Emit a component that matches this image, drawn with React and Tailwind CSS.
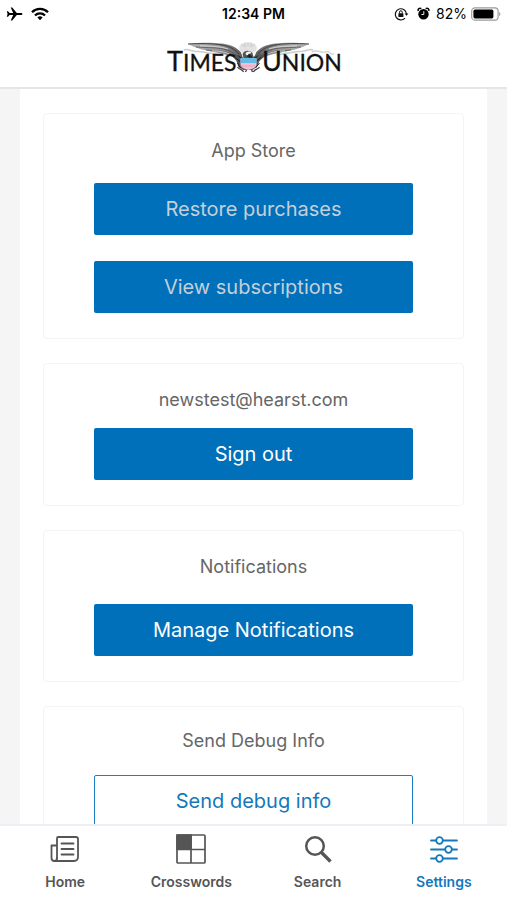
import React, { useState } from "react";

const Airplane = () => (
  <svg width="17" height="14" viewBox="0 0 17 14" aria-hidden="true">
    <path d="M16.5 7c0-.7-.8-1.1-1.7-1.1h-4L6.2.6H4.7l2.5 5.3H3.6L2 4.2H.8L1.6 7 .8 9.8H2l1.6-1.7h3.6l-2.5 5.3h1.5l4.6-5.3h4c.9 0 1.7-.4 1.7-1.1z" fill="#000" />
  </svg>
);

const Wifi = () => (
  <svg width="18" height="14" viewBox="0 0 18 14" fill="none" stroke="#000" strokeWidth="2.3" aria-hidden="true">
    <path d="M1 5.2a11.3 11.3 0 0 1 16 0" />
    <path d="M4 8.5a7.1 7.1 0 0 1 10 0" />
    <path d="M9 13.2 6.4 10.6a3.7 3.7 0 0 1 5.2 0z" fill="#000" stroke="none" />
  </svg>
);

const RotationLock = () => (
  <svg width="15" height="14" viewBox="0 0 15 14" fill="none" stroke="#111" strokeWidth="1.2" aria-hidden="true">
    <path d="M11 11.2A5.6 5.6 0 1 1 12.5 7" />
    <path d="M10.6 6.4h3.8l-1.9 2.4z" fill="#111" stroke="none" />
    <rect x="4.4" y="6.3" width="5" height="3.8" rx=".5" fill="#111" stroke="none" />
    <path d="M5.5 6.5V5.2a1.4 1.4 0 0 1 2.8 0v1.3" strokeWidth="1" />
  </svg>
);

const Alarm = () => (
  <svg width="13" height="14" viewBox="0 0 13 14" aria-hidden="true">
    <circle cx="6.5" cy="7.3" r="5.2" fill="#000" />
    <path d="M1.3 4A2 2 0 0 1 4.3 1.6M11.7 4a2 2 0 0 0-3-2.4" stroke="#000" strokeWidth="1.5" fill="none" />
    <path d="M6.8 4.2v3.3H4.4" stroke="#fff" strokeWidth=".9" fill="none" />
  </svg>
);

const Battery = () => (
  <svg width="30" height="14" viewBox="0 0 30 14" aria-hidden="true">
    <rect x=".7" y=".9" width="26.4" height="12.2" rx="3.2" fill="none" stroke="#999" strokeWidth="1.1" />
    <rect x="2.4" y="2.6" width="20" height="8.8" rx="1.6" fill="#000" />
    <path d="M28.2 4.9c1.6.6 1.6 3.6 0 4.2z" fill="#999" />
  </svg>
);

// one wing, drawn for the left side and mirrored for the right
const Wing = () => (
  <>
    <path d="M24 2c11-1.5 24-1.5 34-.5 9 1 15 4 19 9l3 9-9-3C62 10 40 11 24 2z" fill="url(#wing)" />
    <path d="M24 2c13-.8 25-.6 35 1 8 1.5 13 5 16 9" stroke="#444" strokeWidth="1" fill="none" />
    <path d="M32 5c12 1 22 0 31 3 6 2 9 5 12 9M42 8c9 1 17 0 24 4M56 3c8 1 14 4 19 10" stroke="#555" strokeWidth=".8" fill="none" />
    <path d="M36 3.8c10 .5 19 .2 28 3M48 8.8c7 0 12 .8 17 3" stroke="#eee" strokeWidth=".7" fill="none" />
    <path d="M20 8c4-2 8 2 13 1.5s8 1.500 12 1.500 7 2 12 2" stroke="#ccc" strokeWidth="1.5" fill="none" />
  </>
);

const Logo = () => (
  <svg width="180" height="44" viewBox="0 -2 180 44" role="img" aria-label="Times Union">
    <defs>
      <linearGradient id="wing" x1="0" x2="1">
        <stop offset="0" stopColor="#b5b5b5" />
        <stop offset=".6" stopColor="#959595" />
        <stop offset="1" stopColor="#555" />
      </linearGradient>
    </defs>
    <Wing />
    <g transform="matrix(-1 0 0 1 169 0)">
      <Wing />
    </g>
    <path d="M148 10c5-3 8 1 13 0 5-2 4 3 9 2" stroke="#d4d4d4" strokeWidth="1.5" fill="none" />
    <g transform="translate(-1.5 0)">
      {/* glory behind the head */}
      <ellipse cx="85.5" cy="6" rx="9" ry="6" fill="#e2e2e2" />
      <path d="M79 2l3 3M82 1l1 4M85.5 1v3M89 1l-1 4M92 2l-3 3" stroke="#c4c4c4" strokeWidth=".8" />
      {/* body */}
      <path d="M69 13c5-1 9 0 12 3l-1-4c2-4 7-4 10-1l1 4c3-3 7-4 12-2l-6 6-3 6-4 3H81l-5-3-2-6z" fill="#555" />
      <path d="M83 12c1-3 5-3 6-1l-3 1-1 2z" fill="#f3f3f3" />
      <path d="M72 15l6 5M76 14l5 4M99 15l-6 5M95 14l-5 4M75 21l3 5M97 21l-4 5" stroke="#1c1c1c" strokeWidth="1" />
      <path d="M84 14l3-2 3 3-3 1z" fill="#222" />
      <path d="M78 17h16v6c-1 3-4 4-8 5-4-1-7-2-8-5z" fill="#f3bcd4" />
      <path d="M78 16h16v5H78z" fill="#62bbe5" />
      <path d="M78 24h15" stroke="#e59cbd" strokeWidth=".8" />
      <path d="M75 25c2 3 5 2 6 5M97 25c-2 3-5 2-6 5M84 28l-1 2M89 28l1 2" stroke="#444" strokeWidth="1.3" fill="none" />
    </g>
    <g fill="#111" stroke="#111" strokeWidth=".3" className="font-[Lato,'Liberation_Sans',sans-serif]">
      <text x="3" y="29" fontSize="27">T<tspan fontSize="23">IMES</tspan></text>
      <text x="98" y="29" fontSize="27">U<tspan fontSize="23">NION</tspan></text>
    </g>
  </svg>
);

const HomeIcon = () => (
  <svg width="30" height="30" viewBox="0 0 30 30" fill="none" stroke="currentColor" strokeWidth="1.8" strokeLinecap="round" strokeLinejoin="round" aria-hidden="true">
    <path d="M7 24.5V4.2Q7 3 8.2 3h17.6Q28 3 28 5.2v17.600Q28 27 24 27H4.5Q1.5 27 1.5 24V11.5H7" />
    <path d="M7 24q0 3-2.5 3" />
    <path d="M11.5 9.5h12M11.5 15h12M11.5 20.5h12" />
  </svg>
);

const CrosswordIcon = () => (
  <svg width="30" height="30" viewBox="0 0 30 30" fill="none" stroke="currentColor" strokeWidth="1.7" aria-hidden="true">
    <rect x="1" y="1" width="28" height="28" rx="1" />
    <path d="M1 1h14v14H1z" fill="currentColor" />
    <path d="M15 1v28M1 15.5h28" />
  </svg>
);

const SearchIcon = () => (
  <svg width="30" height="30" viewBox="0 0 30 30" fill="none" stroke="currentColor" aria-hidden="true">
    <circle cx="12" cy="12" r="8.8" strokeWidth="2.5" />
    <path d="M18.5 18.5 27.5 27.5" strokeWidth="3.4" />
  </svg>
);

const SettingsIcon = () => (
  <svg width="30" height="30" viewBox="0 0 30 30" fill="none" stroke="currentColor" strokeWidth="1.8" strokeLinecap="round" aria-hidden="true">
    <path d="M2 6.5h5M14 6.5h14M2 15.5h14M23 15.5h5M2 24.5h5M14 24.5h14" />
    <circle cx="10.5" cy="6.5" r="3.3" />
    <circle cx="19.5" cy="15.5" r="3.3" />
    <circle cx="10.5" cy="24.5" r="3.3" />
  </svg>
);

const Card = ({ title, className = "pt-6", children }) => (
  <section className={`flex flex-col items-center rounded-sm border border-[#f4f4f4] px-[50px] pb-[25px] ${className}`}>
    <h2 className="text-lg leading-6 text-[#666]">{title}</h2>
    {children}
  </section>
);

const Button = ({ className, children }) => (
  <button type="button" className={`h-[52px] w-full rounded-xs bg-[#0070ba] text-xl ${className}`}>
    {children}
  </button>
);

const tabs = [
  { label: "Home", Icon: HomeIcon },
  { label: "Crosswords", Icon: CrosswordIcon },
  { label: "Search", Icon: SearchIcon },
  { label: "Settings", Icon: SettingsIcon },
];

const App = () => {
  const [activeTab, setActiveTab] = useState("Settings");

  return (
    <div className="flex h-screen flex-col bg-white font-[Inter,'Liberation_Sans',sans-serif]">
      {/* STATUS BAR */}
      <div className="grid grid-cols-3 items-center px-1.5 pt-1 text-sm leading-5 text-black">
        <div className="flex items-center gap-2">
          <Airplane />
          <Wifi />
        </div>
        <span className="text-center font-semibold">12:34 PM</span>
        <div className="flex items-center justify-end gap-1">
          <div className="flex gap-2">
            <RotationLock />
            <Alarm />
          </div>
          <span className="pl-0.5">82%</span>
          <Battery />
        </div>
      </div>

      {/* HEADER */}
      <header className="flex justify-center border-b-2 border-[#e6e6e8] pt-4 pb-[3px]">
        <Logo />
      </header>

      {/* SETTINGS */}
      <main className="min-h-0 flex-1 overflow-hidden bg-[#f5f5f6] px-5">
        <div className="flex min-h-full flex-col gap-6 bg-white px-[23px] py-6">
          <Card title="App Store" className="pt-[25px]">
            <Button className="mt-5 text-[#c5cfd8]">Restore purchases</Button>
            <Button className="mt-[26px] text-[#c5cfd8]">View subscriptions</Button>
          </Card>
          <Card title="newstest@hearst.com">
            <Button className="mt-4 text-white">Sign out</Button>
          </Card>
          <Card title="Notifications">
            <Button className="mt-[25px] text-white">Manage Notifications</Button>
          </Card>
          <Card title="Send Debug Info" className="pt-[22px]">
            <button type="button" className="mt-[22px] h-[52px] w-full rounded-xs border border-[#1c7fc4] text-xl text-[#1478bb]">
              Send debug info
            </button>
          </Card>
        </div>
      </main>

      {/* TAB BAR */}
      <nav className="grid grid-cols-4 border-t-2 border-[#eeeef5] bg-white py-2 pl-0.5">
        {tabs.map(({ label, Icon }) => (
          <button
            key={label}
            type="button"
            onClick={() => setActiveTab(label)}
            className={`flex flex-col items-center gap-2 text-sm leading-5 font-semibold ${activeTab === label ? "text-[#1478bb]" : "text-[#555]"}`}
          >
            <Icon />
            {label}
          </button>
        ))}
      </nav>
    </div>
  );
};

export default App;
